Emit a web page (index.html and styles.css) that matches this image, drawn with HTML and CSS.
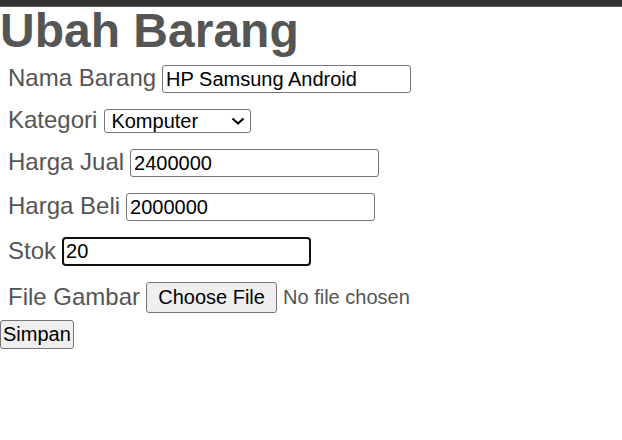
FILE: index.html
```html
<!DOCTYPE html>
<html lang="id">
<head>
<meta charset="utf-8">
<title>Ubah Barang</title>
<link rel="stylesheet" href="styles.css">
</head>
<body>
<div class="topbar"></div>
<h1 class="title">Ubah Barang</h1>
<form class="form">
  <div class="row r1">
    <label class="label">Nama Barang</label>
    <input class="field" type="text" value="HP Samsung Android">
  </div>
  <div class="row r2">
    <label class="label">Kategori</label>
    <div class="select-wrap">
      <select class="select">
        <option>Komputer</option>
      </select>
      <svg class="chevron" width="14" height="8" viewBox="0 0 14 8"><path d="M1.5 1.5 L7 6.5 L12.5 1.5" fill="none" stroke="#000" stroke-width="2.2"/></svg>
    </div>
  </div>
  <div class="row r3">
    <label class="label">Harga Jual</label>
    <input class="field" type="text" value="2400000">
  </div>
  <div class="row r4">
    <label class="label">Harga Beli</label>
    <input class="field" type="text" value="2000000">
  </div>
  <div class="row r5">
    <label class="label">Stok</label>
    <input class="field focused" type="text" value="20">
  </div>
  <div class="row r6">
    <label class="label">File Gambar</label>
    <span class="file-btn">Choose File</span>
    <span class="file-note">No file chosen</span>
  </div>
  <div class="submit-row">
    <button class="btn" type="button">Simpan</button>
  </div>
</form>
</body>
</html>
```
FILE: styles.css
```css
html, body {
  margin: 0;
  padding: 0;
  background: #fff;
}
body {
  font-family: "Liberation Sans", Arial, sans-serif;
  color: #555;
}
.topbar {
  height: 6px;
  background: #333336;
  border-bottom: 1px solid #5e5e5e;
}
.title {
  margin: 0;
  font-size: 48px;
  line-height: 48px;
  font-weight: bold;
  color: #555;
}
.form {
  margin: 0;
}
.row {
  display: flex;
  align-items: center;
  gap: 6px;
  padding-left: 8px;
  height: 28px;
}
.r1 { margin-top: 10px; }
.r2 { margin-top: 14px; }
.r3 { margin-top: 14px; }
.r4 { margin-top: 16px; }
.r5 { margin-top: 16px; height: 29px; }
.r6 { margin-top: 16px; height: 31px; }
.label {
  font-size: 24px;
  line-height: 28px;
  margin-bottom: 2px;
  color: #555;
}
.field {
  box-sizing: border-box;
  width: 249px;
  height: 28px;
  margin: 0;
  padding: 0 3px;
  border: 1px solid #767676;
  border-radius: 3px;
  font-family: "Liberation Sans", Arial, sans-serif;
  font-size: 20px;
  color: #000;
  background: #fff;
  outline: none;
}
.focused {
  height: 29px;
  border: 2px solid #101010;
  border-radius: 4px;
  padding: 0 2px;
}
.select-wrap {
  position: relative;
  display: flex;
  margin-left: 1px;
}
.select {
  -webkit-appearance: none;
  appearance: none;
  box-sizing: border-box;
  width: 147px;
  height: 24px;
  margin: 0;
  padding: 0 0 0 6px;
  border: 1px solid #767676;
  border-radius: 3px;
  background: #fff;
  font-family: "Liberation Sans", Arial, sans-serif;
  font-size: 20px;
  line-height: 22px;
  color: #000;
}
.chevron {
  position: absolute;
  right: 6px;
  top: 8px;
  pointer-events: none;
}
.file-btn {
  box-sizing: border-box;
  height: 31px;
  width: 131px;
  display: flex;
  align-items: center;
  justify-content: center;
  background: #efefef;
  border: 1px solid #767676;
  border-radius: 3px;
  font-size: 20px;
  color: #000;
}
.file-note {
  font-size: 20px;
  color: #555;
}
.submit-row {
  margin-top: 7px;
  display: flex;
}
.btn {
  box-sizing: border-box;
  height: 29px;
  margin: 0;
  padding: 0 2px;
  background: #efefef;
  border: 1px solid #767676;
  border-radius: 3px;
  font-family: "Liberation Sans", Arial, sans-serif;
  font-size: 20px;
  color: #000;
}
```
